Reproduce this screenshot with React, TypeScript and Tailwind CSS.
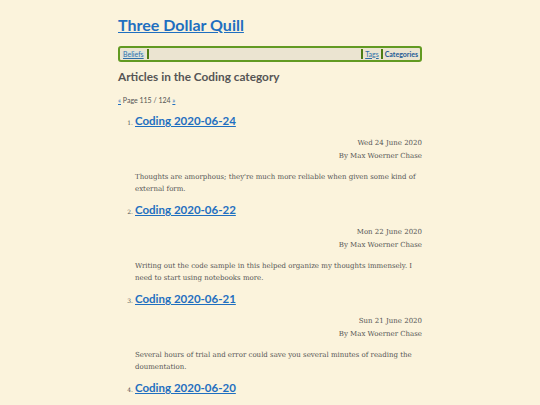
const articles = [
  {
    title: "Coding 2020-06-24",
    date: "Wed 24 June 2020",
    summary: "Thoughts are amorphous; they're much more reliable when given some kind of external form.",
  },
  {
    title: "Coding 2020-06-22",
    date: "Mon 22 June 2020",
    summary: "Writing out the code sample in this helped organize my thoughts immensely. I need to start using notebooks more.",
  },
  {
    title: "Coding 2020-06-21",
    date: "Sun 21 June 2020",
    summary: "Several hours of trial and error could save you several minutes of reading the doumentation.",
  },
  {
    title: "Coding 2020-06-20",
    date: "Sat 20 June 2020",
    summary: "",
  },
];

const heading = { fontFamily: "Lato, 'Open Sans', sans-serif" };
const body = { fontFamily: "'DejaVu Serif', 'Liberation Serif', serif" };

export default function App() {
  return (
    <div className="h-[405px] w-[540px] overflow-hidden bg-[#fbf3dc]">
      <div className="mx-auto w-[304px] pt-[14px]" style={body}>
        <h1 className="text-[16px] font-bold leading-[22px]" style={heading}>
          <a href="#" className="text-[#1f6fc0] underline">Three Dollar Quill</a>
        </h1>

        <nav
          className="mt-[10px] flex h-[16px] items-center rounded-[3px] border-2 border-[#629a22] bg-[#ebe4d1] px-[2px] text-[7px] leading-none"
          style={heading}
        >
          <a href="#" className="bg-[#dbe3dc] px-[1px] text-[#2f6ea8] underline">Beliefs</a>
          <span className="mx-[2px] h-[10px] w-[2px] bg-[#4f7d15]" />
          <span className="flex-1" />
          <span className="mx-[2px] h-[10px] w-[2px] bg-[#4f7d15]" />
          <a href="#" className="text-[#2f6ea8] underline">Tags</a>
          <span className="mx-[2px] h-[10px] w-[2px] bg-[#4f7d15]" />
          <a href="#" className="font-bold text-[#1d5a96]">Categories</a>
        </nav>

        <h2 className="mt-[6px] text-[11.8px] font-bold leading-[18px] text-[#555555]" style={heading}>
          Articles in the Coding category
        </h2>

        <p className="mt-[9px] text-[7px] leading-[10px] text-[#555555]" style={heading}>
          <a href="#" className="text-[#1f6fc0] underline">«</a> Page 115 / 124{" "}
          <a href="#" className="text-[#1f6fc0] underline">»</a>
        </p>

        <ol className="mt-[6px] pl-[5px]">
          {articles.map((a, i) => (
            <li key={a.title} className="mb-[5px]">
              <div className="flex items-baseline gap-[2px]">
                <span className="w-[10px] text-right text-[6px] text-[#555555]">{i + 1}.</span>
                <a
                  href="#"
                  className="text-[11.5px] font-bold leading-[20px] text-[#1f6fc0] underline"
                  style={heading}
                >
                  {a.title}
                </a>
              </div>
              <div className="ml-[12px]">
                <div className="mt-[6px] text-right text-[7px] leading-[13px] text-[#555555]">
                  <div>{a.date}</div>
                  <div>By Max Woerner Chase</div>
                </div>
                <p className="mt-[8px] text-[7px] leading-[12px] text-[#555555]">{a.summary}</p>
              </div>
            </li>
          ))}
        </ol>
      </div>
    </div>
  );
}
